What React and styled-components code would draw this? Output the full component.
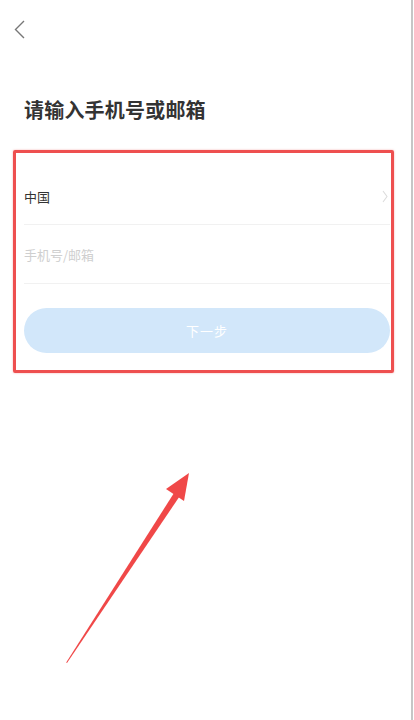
import React from "react";
import styled, {createGlobalStyle} from "styled-components";

const GlobalStyle = createGlobalStyle`
  html, body {
    margin: 0;
    padding: 0;
    background: #fff;
  }
  body {
    font-family: "Noto Sans CJK SC", "Noto Sans", sans-serif;
    color: #333;
  }
`;

const Screen = styled.div`
  position: relative;
  width: 411px;
  height: 720px;
  overflow: hidden;
  background: #fff;
  border-right: 2px solid #c6c6c6;
`;

const NavBar = styled.div`
  height: 58px;
  display: flex;
  align-items: center;
  padding-left: 12px;
`;

const BackButton = styled.button`
  border: 0;
  background: none;
  padding: 0;
  width: 14px;
  height: 20px;
  display: flex;
  align-items: center;
  justify-content: center;
  cursor: pointer;
`;

const Title = styled.h1`
  margin: 38px 0 0 24px;
  font-size: 20px;
  line-height: 28px;
  font-weight: 700;
  color: #333;
  letter-spacing: 0.2px;
`;

const FormCard = styled.div`
  margin: 26px 0 0 13px;
  width: 366px;
  border: 3px solid #ee4f4f;
  border-radius: 2px;
  padding: 15px 1px 17px 8px;
  box-shadow: 0 0 2px rgba(238, 79, 79, 0.5);
`;

const Row = styled.div`
  height: ${p => p.$h}px;
  display: flex;
  align-items: center;
  justify-content: space-between;
  border-bottom: 1px solid #f1f1f1;
  font-size: 13px;
  color: ${p => (p.$muted ? "#cfcfcf" : "#333")};
`;

const NextButton = styled.button`
  margin-top: 24px;
  width: 100%;
  height: 45px;
  border: 0;
  border-radius: 23px;
  background: #d2e7fa;
  color: #fff;
  font-family: inherit;
  font-size: 13px;
  letter-spacing: 1px;
`;

const ArrowLayer = styled.svg`
  position: absolute;
  left: 0;
  top: 0;
  pointer-events: none;
`;

const ChevronLeft = () => (
  <svg width="11" height="19" viewBox="0 0 11 19">
    <path d="M10 1 L1.5 9.5 L10 18" fill="none" stroke="#777" strokeWidth="1.4" />
  </svg>
);

const ChevronRight = () => (
  <svg width="6" height="13" viewBox="0 0 6 13" style={{marginRight: 2}}>
    <path d="M1 1 L5 6.5 L1 12" fill="none" stroke="#dcdcdc" strokeWidth="1.1" />
  </svg>
);

export default function App() {
  return (
    <>
      <GlobalStyle/>
      <Screen>
        <NavBar>
          <BackButton aria-label="back"><ChevronLeft/></BackButton>
        </NavBar>
        <Title>请输入手机号或邮箱</Title>
        <FormCard>
          <Row $h={56}>
            <span>中国</span>
            <ChevronRight/>
          </Row>
          <Row $h={58} $muted>
            <span>手机号/邮箱</span>
          </Row>
          <NextButton>下一步</NextButton>
        </FormCard>
        {/* annotation arrow */}
        <ArrowLayer width="414" height="720" viewBox="0 0 414 720">
          <path d="M67 663 L66.2 662.4 L174 493 L179.5 496.5 Z" fill="#f04848"/>
          <path d="M189 473 L166 489 L184 501 Z" fill="#f04848"/>
        </ArrowLayer>
      </Screen>
    </>
  );
}
